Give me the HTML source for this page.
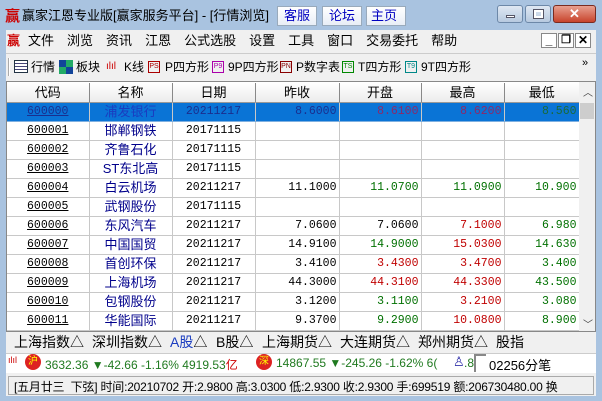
<!DOCTYPE html>
<html><head><meta charset="utf-8"><style>
*{margin:0;padding:0;box-sizing:border-box}
body{width:602px;height:401px;overflow:hidden;background:#a9c3e0;font-family:"Liberation Sans","Noto Sans CJK SC",sans-serif;position:relative}
.a{position:absolute}
.cj{font-family:"Liberation Sans","Noto Sans CJK SC",sans-serif}
table{border-collapse:collapse;table-layout:fixed;position:absolute;left:7px;top:83px;width:572px}
td{height:19px;line-height:18px;border-right:1px solid #c8c8c8;border-bottom:1px solid #c8c8c8;font-size:11.5px;font-family:"Liberation Mono","Noto Sans CJK SC",monospace;white-space:nowrap;overflow:hidden;padding:0 2px}
td div{height:18px;overflow:hidden}
th{height:19px;line-height:17px;font-weight:normal;font-size:13px;background:linear-gradient(#fff,#ececec);border-right:1px solid #888;border-bottom:1px solid #999}
.c{text-align:center}.r{text-align:right}
.u{text-decoration:underline}
.n{color:#00008b;font-family:"Liberation Sans","Noto Sans CJK SC",sans-serif;font-size:13px;text-align:center}
.g{color:#007000}.rd{color:#c00000}
tr.sel td{background:#0a74d6;color:#1a2e8e;border-bottom-color:#7fb0e0}
.btn{background:linear-gradient(#fff,#e8eef6);border:1px solid #9ab;color:#0000c0;font-size:13px;text-align:center;line-height:18px}
.wb{border:1px solid #6d88a8;border-radius:3px;background:linear-gradient(#dfe8f3,#b7c9df)}
.menu span{margin-right:13px}
.ic{position:absolute;top:3px;width:12px;height:12px;font-size:7px;line-height:10px;text-align:center}
.tb{position:absolute;font-size:12px}
.tab{position:absolute;top:0}
</style></head><body>
<div class="a" style="left:5px;top:5px;color:#c00;font-size:15px;font-weight:bold">赢</div>
<div class="a cj" style="left:22px;top:5px;font-size:13px;color:#000">赢家江恩专业版[赢家服务平台] - [行情浏览]</div>
<div class="a btn" style="left:277px;top:6px;width:40px;height:20px">客服</div>
<div class="a btn" style="left:322px;top:6px;width:40px;height:20px">论坛</div>
<div class="a btn" style="left:366px;top:6px;width:40px;height:20px;text-align:left;padding-left:4px">主页</div>
<div class="a wb" style="left:497px;top:5px;width:26px;height:18px"><div class="a" style="left:8px;top:9px;width:9px;height:3px;background:#fff;border:1px solid #556"></div></div>
<div class="a wb" style="left:525px;top:5px;width:26px;height:18px"><div class="a" style="left:8px;top:4px;width:9px;height:8px;border:2px solid #fff;outline:1px solid #556"></div></div>
<div class="a" style="left:553px;top:5px;width:43px;height:18px;border:1px solid #7a2b20;border-radius:3px;background:linear-gradient(#e8a090,#c8442c);color:#fff;font-weight:bold;text-align:center;font-size:13px;line-height:16px">✕</div>
<div class="a" style="left:6px;top:30px;width:590px;height:366px;background:#f0f0f0"></div>
<div class="a menu" style="left:7px;top:31px;font-size:13px;line-height:20px"><span style="color:#c00;font-weight:bold;margin-right:8px">赢</span><span>文件</span><span>浏览</span><span>资讯</span><span>江恩</span><span>公式选股</span><span>设置</span><span>工具</span><span>窗口</span><span>交易委托</span><span>帮助</span></div>
<div class="a" style="left:541px;top:33px;width:16px;height:15px;border:1px solid #888;background:#fff;font-size:12px;font-weight:bold;text-align:center;line-height:13px">_</div>
<div class="a" style="left:558px;top:33px;width:16px;height:15px;border:1px solid #888;background:#fff;font-size:11px;font-weight:bold;text-align:center;line-height:13px">❐</div>
<div class="a" style="left:575px;top:33px;width:16px;height:15px;border:1px solid #888;background:#fff;font-size:12px;font-weight:bold;text-align:center;line-height:13px">✕</div>
<div class="a" style="left:6px;top:53px;width:590px;height:1px;background:#ccc"></div>
<div class="a" style="left:8px;top:58px;width:2px;height:18px;border-left:1px solid #aaa;border-right:1px solid #fff"></div>
<div class="a" style="left:0;top:58px;width:602px;height:18px;line-height:18px;white-space:nowrap">
<span class="a" style="left:14px;top:2px;width:14px;height:13px;border:1px solid #234;background:repeating-linear-gradient(#fff 0 2px,#447 2px 3px)"></span>
<span class="tb" style="left:31px">行情</span>
<span class="a" style="left:59px;top:2px;width:14px;height:14px;background:conic-gradient(#2a6 0 25%,#149 0 50%,#2a6 0 75%,#149 0)"></span>
<span class="tb" style="left:76px">板块</span>
<span class="a" style="left:106px;color:#c00;font-size:10px">ılıl</span>
<span class="tb" style="left:124px">K线</span>
<span class="ic" style="left:148px;border:1px solid #a00;color:#a00">PS</span>
<span class="tb" style="left:165px">P四方形</span>
<span class="ic" style="left:212px;border:1px solid #a0a;color:#a0a">P9</span>
<span class="tb" style="left:228px">9P四方形</span>
<span class="ic" style="left:280px;border:1px solid #800;color:#800">PN</span>
<span class="tb" style="left:296px">P数字表</span>
<span class="ic" style="left:342px;border:1px solid #080;color:#080">TS</span>
<span class="tb" style="left:358px">T四方形</span>
<span class="ic" style="left:405px;border:1px solid #088;color:#088">T9</span>
<span class="tb" style="left:421px">9T四方形</span>
<span class="a" style="left:582px;top:-4px;font-size:11px">»</span>
</div>
<div class="a" style="left:6px;top:81px;width:590px;height:251px;background:#fff;border:1px solid #888"></div>
<table>
<colgroup><col style="width:82px"><col style="width:83px"><col style="width:83px"><col style="width:84px"><col style="width:82px"><col style="width:83px"><col style="width:75px"></colgroup>
<tr><th>代码</th><th>名称</th><th>日期</th><th>昨收</th><th>开盘</th><th>最高</th><th style="border-right:none">最低</th></tr>
<tr class="sel"><td class="c u"><div>600000</div></td><td class="n" style="color:#1a3cc0"><div>浦发银行</div></td><td class="c"><div>20211217</div></td><td class="r"><div>8.6000</div></td><td class="r" style="color:#8a2a6a"><div>8.6100</div></td><td class="r" style="color:#8a2a6a"><div>8.6200</div></td><td class="r" style="color:#1a6a3a"><div>8.560</div></td></tr>
<tr><td class="c u"><div>600001</div></td><td class="n"><div>邯郸钢铁</div></td><td class="c"><div>20171115</div></td><td></td><td></td><td></td><td></td></tr>
<tr><td class="c u"><div>600002</div></td><td class="n"><div>齐鲁石化</div></td><td class="c"><div>20171115</div></td><td></td><td></td><td></td><td></td></tr>
<tr><td class="c u"><div>600003</div></td><td class="n"><div>ST东北高</div></td><td class="c"><div>20171115</div></td><td></td><td></td><td></td><td></td></tr>
<tr><td class="c u"><div>600004</div></td><td class="n"><div>白云机场</div></td><td class="c"><div>20211217</div></td><td class="r"><div>11.1000</div></td><td class="r g"><div>11.0700</div></td><td class="r g"><div>11.0900</div></td><td class="r g"><div>10.900</div></td></tr>
<tr><td class="c u"><div>600005</div></td><td class="n"><div>武钢股份</div></td><td class="c"><div>20171115</div></td><td></td><td></td><td></td><td></td></tr>
<tr><td class="c u"><div>600006</div></td><td class="n"><div>东风汽车</div></td><td class="c"><div>20211217</div></td><td class="r"><div>7.0600</div></td><td class="r"><div>7.0600</div></td><td class="r rd"><div>7.1000</div></td><td class="r g"><div>6.980</div></td></tr>
<tr><td class="c u"><div>600007</div></td><td class="n"><div>中国国贸</div></td><td class="c"><div>20211217</div></td><td class="r"><div>14.9100</div></td><td class="r g"><div>14.9000</div></td><td class="r rd"><div>15.0300</div></td><td class="r g"><div>14.630</div></td></tr>
<tr><td class="c u"><div>600008</div></td><td class="n"><div>首创环保</div></td><td class="c"><div>20211217</div></td><td class="r"><div>3.4100</div></td><td class="r rd"><div>3.4300</div></td><td class="r rd"><div>3.4700</div></td><td class="r g"><div>3.400</div></td></tr>
<tr><td class="c u"><div>600009</div></td><td class="n"><div>上海机场</div></td><td class="c"><div>20211217</div></td><td class="r"><div>44.3000</div></td><td class="r rd"><div>44.3100</div></td><td class="r rd"><div>44.3300</div></td><td class="r g"><div>43.500</div></td></tr>
<tr><td class="c u"><div>600010</div></td><td class="n"><div>包钢股份</div></td><td class="c"><div>20211217</div></td><td class="r"><div>3.1200</div></td><td class="r g"><div>3.1100</div></td><td class="r rd"><div>3.2100</div></td><td class="r g"><div>3.080</div></td></tr>
<tr><td class="c u"><div>600011</div></td><td class="n"><div>华能国际</div></td><td class="c"><div>20211217</div></td><td class="r"><div>9.3700</div></td><td class="r g"><div>9.2900</div></td><td class="r rd"><div>10.0800</div></td><td class="r g"><div>8.900</div></td></tr>
</table>
<div class="a" style="left:579px;top:82px;width:16px;height:249px;background:#f0f0f0"></div>
<div class="a" style="left:583px;top:84px;font-size:10px;color:#444">︿</div>
<div class="a" style="left:580px;top:103px;width:14px;height:16px;background:#cdcdcd"></div>
<div class="a" style="left:583px;top:316px;font-size:10px;color:#444">﹀</div>
<div class="a" style="left:6px;top:332px;width:590px;height:20px;background:#f0f0f0"></div>
<div class="a cj" style="left:0;top:333px;width:602px;height:19px;font-size:14px;line-height:18px;white-space:nowrap;overflow:hidden">
<span class="tab" style="left:14px">上海指数△</span>
<span class="tab" style="left:92px">深圳指数△</span>
<span class="tab" style="left:170px"><span style="color:#1a3cc0">A股</span>△</span>
<span class="tab" style="left:216px">B股△</span>
<span class="tab" style="left:262px">上海期货△</span>
<span class="tab" style="left:340px">大连期货△</span>
<span class="tab" style="left:418px">郑州期货△</span>
<span class="tab" style="left:496px">股指</span>
</div>
<div class="a" style="left:6px;top:353px;width:590px;height:20px;background:#fff;border-top:1px solid #ccc"></div>
<div class="a" style="left:8px;top:355px;color:#c00;font-size:9px">ılıl</div>
<div class="a" style="left:25px;top:354px;width:16px;height:16px;border-radius:50%;background:#d22;color:#ff0;font-size:10px;text-align:center;line-height:16px">沪</div>
<div class="a" style="left:45px;top:356px;font-size:12px;color:#207a20;white-space:nowrap">3632.36 ▼-42.66 -1.16% 4919.53<span style="color:#c00">亿</span></div>
<div class="a" style="left:256px;top:354px;width:16px;height:16px;border-radius:50%;background:#d22;color:#ff0;font-size:10px;text-align:center;line-height:16px">深</div>
<div class="a" style="left:276px;top:356px;font-size:12px;color:#207a20;white-space:nowrap">14867.55 ▼-245.26 -1.62% 6(</div>
<div class="a" style="left:453px;top:354px;color:#33a;font-size:13px">♙</div>
<div class="a" style="left:464px;top:356px;font-size:12px;color:#207a20">.8</div>
<div class="a" style="left:474px;top:354px;width:12px;height:18px;border-left:2px solid #888;border-top:2px solid #888"></div>
<div class="a" style="left:489px;top:355px;font-size:13px">02256分笔</div>
<div class="a" style="left:8px;top:376px;width:586px;height:19px;border:1px solid #aaa;background:#f0f0f0"></div>
<div class="a" style="left:14px;top:378px;font-size:12px;white-space:nowrap;letter-spacing:-0.2px">[五月廿三&nbsp; 下弦] 时间:20210702 开:2.9800 高:3.0300 低:2.9300 收:2.9300 手:699519 额:206730480.00 换</div>
</body></html>
